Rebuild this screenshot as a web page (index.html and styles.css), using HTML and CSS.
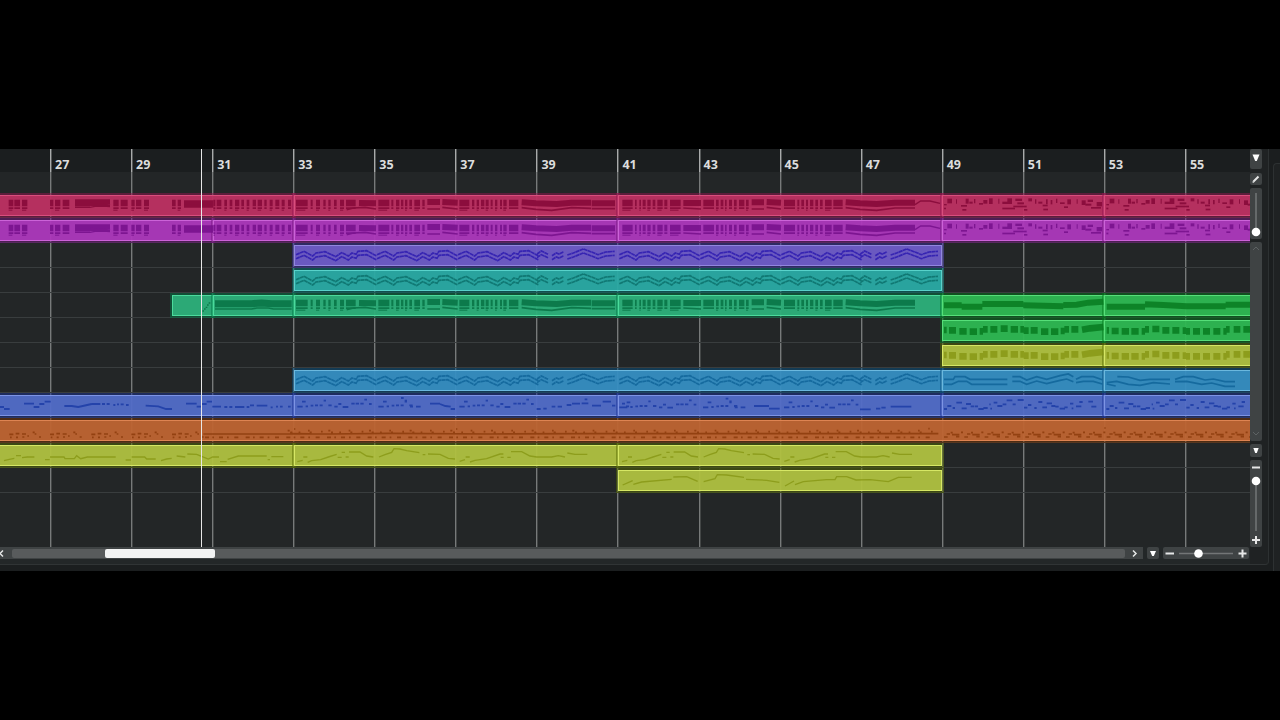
FILE: index.html
```
<!DOCTYPE html>
<html lang="en">

<head>
    <meta charset="UTF-8">
    <meta name="viewport" content="width=device-width, initial-scale=1.0">
    <title>Project Window</title>
    <link rel="stylesheet" href="styles.css">
</head>

<body>

    <div class="project">
        <div class="main">
            <div class="arrange">
                <div class="grid" id="grid"></div>
                <div class="ruler" id="ruler"></div>
                <div class="lane"></div>
                <div class="tracks" id="tracks"></div>
                <div class="cursor"></div>
            </div>

            <div class="bottom">
                <div class="hscroll">
                    <svg class="arrow-left" width="6" height="12" viewBox="0 0 6 12"><path d="M3 3.5L0 6.5l3 3" /></svg>
                    <div class="htrack"><div class="hthumb"></div></div>
                    <svg width="18" height="12" viewBox="0 0 18 12"><path d="M8 3.5l3 3-3 3" /></svg>
                </div>
                <div class="box menu"><svg width="12" height="12" viewBox="0 0 12 12"><path class="solid" d="M3 4h6L6.8 9H5.2z" /></svg></div>
                <div class="box hzoom">
                    <svg width="86" height="12" viewBox="0 0 86 12">
                        <path class="rail" d="M16 6.5h54" />
                        <path class="bold" d="M2.5 6.5h8.5M75.5 6.5h8M79.5 2.5v8" />
                        <circle cx="35.5" cy="6.5" r="4.3" />
                    </svg>
                </div>
            </div>
        </div>

        <div class="side">
            <div class="box top-menu"><svg width="12" height="20" viewBox="0 0 12 20"><path class="solid" d="M2.5 5.5h7L6.8 12H5.2z" /></svg></div>
            <div class="box pencil"><svg width="12" height="12" viewBox="0 0 12 12"><path class="bold" d="M3.5 8.5l5-5" /><path d="M2.7 9.5l1-1" /></svg></div>
            <div class="box wave-zoom">
                <svg width="12" height="51" viewBox="0 0 12 51"><path class="rail" d="M6 5v36" /><circle cx="6" cy="44" r="4.3" /></svg>
            </div>
            <div class="box vscroll">
                <svg width="12" height="12" viewBox="0 0 12 12"><path class="dim" d="M3 8l3-3 3 3" /></svg>
                <svg width="12" height="12" viewBox="0 0 12 12"><path class="dim" d="M3 3l3 3 3-3" /></svg>
            </div>
            <div class="box menu"><svg width="12" height="12" viewBox="0 0 12 12"><path class="solid" d="M3.3 4h5.4L6.8 9H5.2z" /></svg></div>
            <div class="box vzoom">
                <svg width="12" height="87" viewBox="0 0 12 87">
                    <path class="rail" d="M6 24v47" />
                    <path class="bold" d="M2 7.5h8M2 80h8M6 76v8" />
                    <circle cx="6" cy="21" r="4.3" />
                </svg>
            </div>
        </div>
        <div class="edge"></div>
        <div class="panel"></div>
    </div>

    <script src="script.js"></script>
</body>

</html>
```
FILE: styles.css
```
body {
    margin: 0;
    padding: 149px 0;
    height: 422px;
    background-color: #000;
    font-family: "Open Sans", "Noto Sans", sans-serif;
    overflow: hidden;
}

.project {
    display: flex;
    position: relative;
    width: 1280px;
    height: 422px;
    background-color: #1b1e1f;
}

.main {
    width: 1250px;
    height: 415px;
    background-color: #232728;
    border-bottom: 1px solid #303435;
}

.arrange {
    position: relative;
    width: 1250px;
    height: 398px;
    overflow: hidden;
    background-color: #232627;
}

.ruler {
    display: flex;
    height: 23px;
    background-color: #1b1e1f;
    position: relative;
}

.ruler div {
    flex: 0 0 81.07px;
    box-sizing: border-box;
    padding: 5px 0 0 4px;
    border-left: 1px solid #a9abab;
    box-shadow: inset 1px 0 #565959;
    color: #dcdddd;
    font-size: 12.5px;
    font-weight: 700;
    line-height: 21px;
}

.ruler .first,
.grid .first {
    flex-basis: 50px;
    border-left: none;
    box-shadow: none;
}

.grid {
    display: flex;
    position: absolute;
    inset: 0;
}

.grid div {
    flex: 0 0 81.07px;
    box-sizing: border-box;
    border-left: 1px solid #777a7a;
    box-shadow: inset 1px 0 #434646;
}

.lane {
    height: 21px;
}

.track {
    display: flex;
    position: relative;
    height: 25px;
    padding-top: 2px;
    box-sizing: border-box;
    border-bottom: 1px solid #393d3e;
}

.clip {
    flex: none;
    height: 21px;
    box-sizing: border-box;
    border: 1px solid;
    position: relative;
}

.notes {
    position: absolute;
    left: 0;
    top: 2px;
    opacity: 0.85;
}

.notes path {
    fill: none;
    stroke: currentColor;
}

.rose { background-color: rgba(190, 48, 98, 0.95); border-color: #d94e7d; box-shadow: 0 0 0 2px rgba(150, 20, 80, 0.5); }
.purple { background-color: rgba(173, 56, 188, 0.95); border-color: #cb63d8; box-shadow: 0 0 0 2px rgba(120, 20, 130, 0.5); }
.violet { background-color: rgba(111, 92, 200, 0.95); border-color: #9286df; box-shadow: 0 0 0 2px rgba(60, 45, 160, 0.5); }
.teal { background-color: rgba(42, 170, 164, 0.95); border-color: #58d2ca; box-shadow: 0 0 0 2px rgba(0, 120, 115, 0.5); }
.mint { background-color: rgba(45, 176, 122, 0.95); border-color: #4bdb9c; box-shadow: 0 0 0 2px rgba(0, 120, 70, 0.5); }
.green { background-color: rgba(46, 184, 82, 0.95); border-color: #56df79; box-shadow: 0 0 0 2px rgba(0, 120, 25, 0.5); }
.lime { background-color: rgba(176, 193, 64, 0.95); border-color: #d6e765; box-shadow: 0 0 0 2px rgba(85, 105, 0, 0.5); }
.sky { background-color: rgba(54, 142, 194, 0.95); border-color: #6bb8de; box-shadow: 0 0 0 2px rgba(5, 80, 130, 0.5); }
.blue { background-color: rgba(82, 109, 200, 0.95); border-color: #7d94e4; box-shadow: 0 0 0 2px rgba(25, 50, 150, 0.5); }
.orange { background-color: rgba(188, 100, 50, 0.96); border-color: #de8452; box-shadow: 0 0 0 2px rgba(120, 50, 0, 0.5); }

.n-rose { color: #850838; }
.n-purple { color: #77108c; }
.n-violet { color: #2d1bb0; }
.n-teal { color: #0c716c; }
.n-mint { color: #077244; }
.n-green { color: #087c21; }
.n-lime { color: #82920e; opacity: 0.7; }
.n-sky { color: #10659a; }
.n-blue { color: #1d3da7; }
.n-orange { color: #8d3c0c; }

.cursor {
    position: absolute;
    left: 201px;
    top: 0;
    width: 1px;
    height: 100%;
    background-color: #e8e8e8;
}

.bottom {
    display: flex;
    gap: 4px;
    height: 12px;
}

.hscroll {
    display: flex;
    width: 1143px;
    background-color: #3f4344;
}

.htrack {
    flex: 1;
    margin: 2px 0 1px 6px;
    border-radius: 2px;
    background-color: #585b5c;
}

.hthumb {
    width: 110px;
    height: 9px;
    margin-left: 93px;
    border-radius: 2px;
    background-color: #f2f3f3;
}

.box {
    background-color: #3f4344;
    border-radius: 2px;
}

.menu {
    width: 12px;
    height: 13px;
}

.bottom .menu {
    height: 12px;
}

.hzoom {
    width: 86px;
}

.side {
    display: flex;
    flex-direction: column;
    gap: 3px;
    width: 12px;
    height: 415px;
    background-color: #1f2223;
    border-bottom: 1px solid #303435;
}

.top-menu {
    height: 20px;
    margin-bottom: 1px;
}

.pencil {
    height: 12px;
}

.wave-zoom {
    height: 51px;
}

.vscroll {
    display: flex;
    flex-direction: column;
    justify-content: space-between;
    height: 199px;
}

.vzoom {
    height: 87px;
}

.edge {
    width: 6px;
    height: 415px;
    background-color: #1f2223;
    border-right: 1px solid #2d3132;
    border-bottom: 1px solid #303435;
    border-bottom-right-radius: 4px;
}

.panel {
    flex: 1;
    margin: 14px 0 0 4px;
    background-color: #1f2223;
    border-top: 1px solid #2d3132;
    border-left: 1px solid #2d3132;
    border-top-left-radius: 4px;
}

svg {
    display: block;
    fill: none;
    stroke: #e6e7e7;
    stroke-width: 1.5;
}

svg circle,
svg .solid {
    fill: #fff;
    stroke: none;
}

svg .bold {
    stroke-width: 2;
}

svg .rail {
    stroke: #737677;
}

svg .dim {
    stroke: #5d6263;
    stroke-width: 1;
}
```
FILE: script.js
```
// Note positions are in ticks: 3 ticks per pixel, y from the top of the clip.
// A..D are the tick offsets of the four sections of the song.
var A = 0, B = 870, C = 1830, D = 2790;

function box(x, y, w, h) {
    return 'M' + x + ' ' + (y + h / 2) + 'h' + w;
}

function path(d, width) {
    return '<path stroke-width="' + width + '" d="' + d + '"/>';
}

// Connected line through x,y pairs
function line(offset, pts, dy) {
    var d = '';
    for (var i = 0; i < pts.length; i += 2) {
        d += (i ? 'L' : 'M') + (offset + pts[i]) + ' ' + (pts[i + 1] + (dy || 0));
    }
    return d;
}

// Separate flat notes, x,y,width
function dashes(offset, list) {
    var d = '';
    for (var i = 0; i < list.length; i += 3) {
        d += 'M' + (offset + list[i]) + ' ' + list[i + 1] + 'h' + list[i + 2];
    }
    return d;
}

// Stacked chords, from-to pairs
function chords(offset, list) {
    var top = '', low = '', bottom = '';
    for (var i = 0; i < list.length; i += 2) {
        var x = offset + list[i], w = list[i + 1] - list[i];
        top += box(x, 14, w, 20);
        low += box(x, 37, w, 5);
        if (i % 4 !== 2) bottom += box(x, 44, w * 0.8, 3);
    }
    return path(top, 20) + path(low, 5) + path(bottom, 3);
}

var chordsA = [26, 40, 43, 60, 66, 82, 150, 160, 165, 181, 188, 208, 340, 356, 362, 383, 394, 404, 408, 424, 432, 447, 516, 527, 533, 543];
var chordsA2 = [640, 646, 650, 664, 673, 681, 689, 697, 705, 718, 724, 732, 740, 748, 758, 768, 773, 786, 793, 800, 809, 818, 826, 838, 845, 854, 864, 873];
var chordsB = [18, 53, 62, 68, 78, 90, 100, 107, 115, 122, 132, 140, 150, 162, 168, 197, 265, 298, 304, 310, 318, 328, 333, 340, 345, 352, 358, 366, 373, 390, 397, 404, 508, 538, 546, 553, 560, 567, 573, 583, 587, 596, 602, 608, 615, 622, 630, 636, 640, 650, 657, 685];
var chordsC = [37, 68, 75, 80, 88, 93, 98, 107, 112, 122, 128, 136, 142, 158, 163, 172, 180, 212, 280, 312, 318, 326, 332, 340, 345, 350, 357, 366, 372, 380, 387, 403, 408, 416, 522, 555, 562, 568, 574, 582, 588, 594, 600, 610, 616, 624, 630, 638, 645, 665, 670, 698];

function strings() {
    var thick = line(B, [207, 24, 258, 25]) + line(B, [412, 21, 450, 21]) + line(B, [457, 21, 503, 23]) +
        line(B, [695, 22, 738, 25, 800, 27, 845, 23, 903, 23]) + line(B, [905, 25, 975, 25]) +
        line(C, [220, 24, 273, 24]) + line(C, [425, 22, 462, 22]) + line(C, [470, 21, 513, 23]) +
        line(C, [707, 22, 750, 25, 800, 27, 855, 23, 915, 23]);
    var thin = line(B, [170, 44, 190, 39, 225, 37, 258, 42]) + line(B, [412, 42, 450, 42]) + line(B, [457, 37, 503, 42]) +
        line(B, [695, 38, 738, 43, 785, 46, 845, 38, 903, 40]) + line(B, [905, 41, 975, 41]) +
        line(C, [220, 39, 273, 42]) + line(C, [425, 42, 462, 42]) + line(C, [470, 37, 513, 42]) +
        line(C, [707, 38, 750, 43, 800, 46, 855, 39, 915, 39]);
    return chords(B, chordsB) + chords(C, chordsC) + path(thick, 18) + path(thin, 5);
}

function intro() {
    return chords(A, chordsA) + chords(A, chordsA2) +
        path(line(A, [225, 20, 270, 20]) + line(A, [270, 20, 330, 20]) + line(A, [552, 23, 640, 23]), 14) +
        path(line(A, [225, 30, 270, 30]) + line(A, [270, 28, 330, 32]) + line(A, [552, 34, 640, 34]), 9) +
        path(line(A, [225, 37, 270, 37, 285, 34, 330, 34]), 4);
}

// x, y, width, height
var stabs = [42, 27, 8, 3, 42, 38, 6, 4, 52, 11, 14, 13, 78, 13, 3, 12, 93, 30, 18, 4, 97, 42, 12, 4, 107, 11, 9, 14, 118, 20, 10, 5, 132, 12, 4, 12, 147, 24, 12, 4, 160, 15, 12, 10, 177, 10, 11, 16, 205, 11, 3, 14, 217, 38, 38, 4, 217, 20, 25, 6, 232, 10, 14, 16, 256, 11, 20, 6, 250, 32, 40, 4, 262, 22, 20, 5, 282, 42, 10, 4,
    295, 10, 11, 8, 315, 13, 4, 12, 325, 20, 12, 5, 338, 29, 15, 4, 340, 41, 14, 4, 348, 13, 5, 14, 362, 15, 5, 12, 378, 11, 4, 12, 390, 22, 14, 4, 402, 34, 12, 4, 412, 13, 11, 14, 440, 13, 3, 12, 455, 16, 12, 13, 466, 26, 18, 5, 473, 14, 16, 6, 483, 36, 30, 4, 500, 21, 16, 12];

function riff() {
    var out = '';
    for (var r = 0; r < 2; r++) {
        for (var i = 0; i < stabs.length; i += 4) {
            out += path(box(D + stabs[i] + r * 487, stabs[i + 1], stabs[i + 2], stabs[i + 3] + 1), stabs[i + 3] + 1);
        }
    }
    return out;
}

function arpeggio() {
    var bar = [6, 29, 30, 19, 56, 33, 66, 24, 93, 20, 125, 35, 143, 23, 163, 33, 174, 24, 186, 28, 192, 19, 218, 17, 248, 33];
    var d = '';
    [0, 12].forEach(function (dy) {
        [B + 12, C + 22].forEach(function (start) {
            for (var i = 0; i < 3; i++) d += line(start + i * 243, bar, dy);
            d += line(start, [729, 27, 742, 18, 763, 28], dy * 0.9);
            d += line(start, [774, 32, 787, 24, 795, 27, 809, 20], dy);
            d += line(start, [820, 30, 838, 24, 868, 12, 890, 20, 912, 29, 935, 21, 962, 19], dy);
        });
    });
    return '<g stroke-dasharray="12 1">' + path(d, 5) + '</g>';
}

function pads() {
    return arpeggio() + path(
        line(D, [42, 28, 70, 28, 75, 20, 105, 20, 120, 28, 232, 28]) + line(D, [42, 43, 65, 43, 85, 34, 110, 34, 125, 43, 232, 43]) +
        line(D, [247, 20, 270, 20, 290, 30, 320, 20, 350, 28, 390, 17, 415, 12, 430, 20]) +
        line(D, [247, 34, 270, 34, 290, 43, 320, 33, 350, 41, 390, 31, 410, 27, 430, 35]) +
        line(D, [438, 28, 455, 20, 490, 20, 517, 29]) + line(D, [438, 38, 460, 34, 490, 34, 517, 42]) +
        line(D, [530, 42, 557, 48]) + line(D, [530, 38, 560, 34, 595, 43, 630, 46, 670, 38, 720, 42]) +
        line(D, [562, 20, 595, 21, 630, 31, 660, 28, 720, 28]) +
        line(D, [735, 28, 760, 20, 790, 20, 825, 30, 850, 27, 885, 35, 915, 35]) +
        line(D, [735, 35, 770, 34, 815, 43, 845, 39, 885, 49, 915, 49]), 5);
}

function intoMint() {
    return strings() +
        path(line(A, [645, 26, 755, 26, 785, 24, 815, 26, 875, 26]), 21) +
        path(line(A, [645, 42, 755, 42, 770, 39, 805, 39, 820, 42, 875, 42]), 5) +
        path(dashes(A, [607, 48, 5, 612, 42, 5, 617, 37, 5, 621, 30, 5, 626, 24, 5]), 4);
}

function bass() {
    return path(line(D, [42, 31, 95, 31]) + line(D, [95, 35, 157, 35]) + line(D, [157, 27, 280, 27]) + line(D, [280, 31, 400, 34]) +
        line(D, [400, 30, 440, 29, 475, 23, 520, 20]) + line(D, [530, 35, 645, 35]) + line(D, [645, 28, 700, 30, 770, 34, 887, 34]) + line(D, [887, 29, 960, 29]), 18);
}

function pulses() {
    var d = dashes(D, [42, 30, 8, 57, 31, 21, 88, 34, 22, 119, 35, 22, 149, 34, 10, 159, 28, 14, 181, 28, 21, 212, 26, 21, 242, 28, 22, 271, 28, 11, 281, 32, 15, 302, 31, 21, 333, 35, 22, 363, 35, 22, 392, 33, 12, 403, 28, 14, 424, 28, 21]);
    d += dashes(D, [530, 31, 7, 545, 33, 21, 575, 34, 22, 604, 34, 22, 635, 34, 10, 645, 28, 12, 667, 27, 21, 697, 31, 21, 727, 31, 21, 758, 32, 10, 768, 34, 12, 789, 34, 21, 819, 34, 21, 850, 34, 21, 880, 34, 10, 888, 28, 11, 911, 28, 20, 940, 28, 20]);
    return path(d + line(D, [456, 29, 480, 25, 520, 21]), 20);
}

function plucks() {
    var d = dashes(A, [0, 36, 12, 12, 42, 17, 72, 26, 30, 101, 36, 17, 118, 27, 15, 134, 20, 18, 637, 35, 26, 673, 36, 9, 688, 36, 9, 705, 36, 28, 740, 36, 8, 750, 31, 12, 770, 32, 32, 812, 37, 6, 828, 35, 6, 840, 35, 8, 864, 35, 8,
        275, 27, 26, 306, 27, 9, 320, 27, 9, 340, 30, 6, 351, 28, 6, 362, 28, 9, 378, 30, 8, 558, 26, 32, 590, 35, 16, 606, 27, 14, 620, 20, 16]);
    d += line(A, [193, 33, 215, 33, 235, 36, 275, 27]) + line(A, [437, 32, 475, 34, 498, 42, 516, 42]);
    var phrase = [22, 35, 16, 36, 20, 11, 47, 34, 7, 62, 32, 8, 75, 31, 9, 89, 31, 9, 101, 17, 7, 115, 31, 10, 133, 35, 10, 145, 27, 9, 158, 36, 17, 184, 26, 10, 197, 26, 10, 211, 26, 10, 223, 14, 8, 237, 27, 8];
    [0, 243, 486].forEach(function (step, n) {
        var list = n === 1 ? phrase.slice(0, 24).concat([101, 20, 7, 90, 9, 8, 117, 35, 9, 135, 35, 14]) : phrase;
        d += dashes(B + step, list) + dashes(C + 14 + step, list.map(function (v, i) { return i % 3 === 1 ? v + 2 : v; }));
    });
    d += dashes(B, [420, 26, 30, 740, 42, 12, 760, 41, 10, 785, 35, 11, 803, 35, 13, 830, 30, 14, 846, 26, 24, 875, 25, 20, 884, 13, 8, 906, 32, 27, 938, 20, 25, 966, 32, 10, 988, 37, 10, 996, 26, 9, 1008, 34, 9]);
    d += line(B, [450, 27, 466, 33, 482, 35]) + dashes(B, [482, 42, 13]);
    d += dashes(C, [432, 33, 45, 477, 41, 32, 750, 43, 32, 798, 41, 13, 814, 38, 13, 842, 35, 62]);
    for (var r = 0; r < 2; r++) {
        d += dashes(D + r * 487, [42, 42, 9, 52, 33, 12, 68, 39, 7, 79, 23, 17, 95, 40, 15, 108, 27, 15, 122, 34, 10, 134, 34, 10, 145, 42, 16, 160, 39, 13, 178, 28, 4, 181, 41, 5, 191, 23, 11, 202, 33, 15, 218, 28, 11, 230, 16, 17, 248, 28, 9, 263, 15, 18,
            282, 38, 10, 294, 30, 10, 313, 39, 7, 325, 21, 12, 337, 37, 14, 350, 25, 16, 364, 33, 12, 376, 35, 10, 389, 41, 16, 403, 37, 10, 420, 26, 10, 425, 40, 5, 438, 34, 16, 448, 21, 10, 475, 20, 14, 484, 35, 15]);
    }
    return path(d, 5.5);
}

function drums() {
    var d = '';
    // loose groove, then a steady low line from bar 31 to 49
    [28, 150, 274, 394, 516].forEach(function (x) {
        d += dashes(A, [x, 43, 12, x + 2, 52, 5, x + 19, 41, 11, x + 20, 52, 6, x + 38, 42, 12, x + 39, 51, 6, x + 54, 48, 5, x + 70, 37, 6, x + 76, 42, 5, x + 89, 51, 6]);
    });
    d += dashes(A, [610, 42, 305]) + line(B, [0, 41, 120, 42, 300, 40, 600, 42, 900, 41, 985, 41]) + line(C, [0, 41, 985, 41]);
    for (var x = 615; x < D; x += 122) {
        d += dashes(0, [x, 52, 12, x + 22, 52, 5, x + 42, 52, 12, x + 66, 52, 5, x + 88, 52, 12]);
        if (x > 850) d += dashes(0, [x + 4, 32, 6, x + 12, 37, 6, x + 37, 37, 5, x + 65, 32, 5, x + 70, 37, 6, x + 104, 35, 5]);
    }
    for (x = D + 42; x < 3750; x += 61) {
        d += dashes(0, [x, 51, 11, x + 8, 42, 10, x + 20, 38, 6, x + 24, 44, 22, x + 36, 50, 10, x + 51, 37, 6]);
    }
    d += dashes(D, [-5, 26, 4, 523, 24, 4]) + dashes(B, [12, 27, 4, 498, 27, 4]);
    return path(d, 5);
}

function lead() {
    var d = line(A, [12, 47, 28, 43, 43, 40]) + dashes(A, [48, 32, 15, 135, 44, 14]) + line(A, [66, 38, 82, 36, 103, 36]) +
        line(A, [150, 36, 192, 36, 195, 41, 223, 41, 230, 32, 242, 41, 262, 36, 347, 36]) +
        dashes(A, [377, 45, 16]) + line(A, [395, 36, 434, 36, 440, 42, 467, 42]) + line(A, [483, 47, 500, 42, 515, 40]) +
        line(A, [530, 33, 556, 36]) + line(A, [562, 27, 590, 28, 625, 42, 638, 36, 657, 36]) + dashes(A, [660, 50, 20]) +
        line(A, [683, 43, 715, 33, 800, 33]) + dashes(A, [803, 44, 7, 814, 35, 36]);
    [B, C + 14].forEach(function (o) {
        d += line(o, [22, 50, 38, 46]) + dashes(o, [40, 36, 12]) + line(o, [53, 52, 65, 47, 92, 44, 115, 36, 140, 28]) +
            dashes(o, [143, 37, 12, 167, 36, 9, 155, 22, 10]) + line(o, [177, 21, 210, 21, 230, 33, 250, 36]) +
            line(o, [267, 36, 285, 29, 305, 22, 312, 11, 330, 12, 350, 17, 388, 23]) + dashes(o, [398, 29, 8]) +
            line(o, [414, 27, 450, 28, 475, 40, 495, 42]) + line(o, [509, 49, 525, 44]) + dashes(o, [527, 36, 12]) +
            line(o, [540, 51, 555, 46, 590, 41, 630, 27, 640, 27]) + dashes(o, [632, 37, 9, 652, 37, 10]) +
            line(o, [663, 20, 695, 20, 720, 33, 740, 36, 785, 36, 805, 32, 825, 36]) + line(o, [832, 24, 855, 28, 892, 28]);
    });
    return path(d, 4);
}

function harmony() {
    return path(line(C, [38, 45, 68, 32]) + line(C, [70, 43, 95, 36, 185, 28]) + line(C, [190, 21, 230, 20, 263, 34]) +
        line(C, [281, 35, 315, 26, 322, 14, 350, 15, 402, 22]) + line(C, [408, 28, 470, 31, 508, 37]) +
        line(C, [525, 48, 552, 33]) + line(C, [555, 44, 580, 35, 650, 29, 675, 29, 680, 20, 710, 20, 738, 30, 780, 29, 835, 35, 865, 22, 905, 22]), 4);
}

// Clip edges in pixels; a pair of [start, colour] opens each clip
var tracks = [
    { clips: [[-3, 'rose'], [294, 'rose'], [617.5, 'rose'], [942, 'rose'], [1104, 'rose'], 1254], notes: [['rose', intro() + strings() + riff() + path(line(C, [915, 29, 932, 18, 960, 18, 990, 25]), 4)]] },
    { clips: [[-3, 'purple'], [212.5, 'purple'], [294, 'purple'], [617.5, 'purple'], [942, 'purple'], [1104, 'purple'], 1254], notes: [['purple', intro() + strings() + riff() + path(line(C, [915, 29, 932, 18, 960, 18, 990, 25]), 4)]] },
    { clips: [[294, 'violet'], 942], notes: [['violet', arpeggio()]] },
    { clips: [[294, 'teal'], 942], notes: [['teal', arpeggio()]] },
    { clips: [[172, 'mint'], [212.5, 'mint'], [294, 'mint'], [617.5, 'mint'], [942, 'green'], [1104, 'green'], 1254], notes: [['mint', intoMint()], ['green', bass()]] },
    { clips: [[942, 'green'], [1104, 'green'], 1254], notes: [['green', pulses()]] },
    { clips: [[942, 'lime'], [1104, 'lime'], 1254], notes: [['lime', pulses()]] },
    { clips: [[294, 'sky'], [942, 'sky'], [1104, 'sky'], 1254], notes: [['sky', pads()]] },
    { clips: [[-3, 'blue'], [294, 'blue'], [617.5, 'blue'], [942, 'blue'], [1104, 'blue'], 1254], notes: [['blue', plucks()]] },
    { clips: [[-3, 'orange'], 1254], notes: [['orange', drums()]] },
    { clips: [[-3, 'lime'], [294, 'lime'], [617.5, 'lime'], 942], notes: [['lime', lead()]] },
    { clips: [[617.5, 'lime'], 942], notes: [['lime', harmony()]] }
];

var html = '';
tracks.forEach(function (track) {
    html += '<div class="track">';
    for (var i = 0; i < track.clips.length - 1; i++) {
        var clip = track.clips[i], next = track.clips[i + 1];
        var end = Array.isArray(next) ? next[0] : next;
        html += '<div class="clip ' + clip[1] + '" style="width:' + (end - clip[0]) + 'px;' +
            (i === 0 ? 'margin-left:' + clip[0] + 'px' : '') + '"></div>';
    }
    track.notes.forEach(function (n) {
        html += '<svg class="notes n-' + n[0] + '" width="1250" height="21" viewBox="0 0 3750 63">' + n[1] + '</svg>';
    });
    html += '</div>';
});
document.getElementById('tracks').innerHTML = html;

var ruler = '<div class="first"></div>';
var grid = ruler;
for (var bar = 27; bar <= 55; bar += 2) {
    ruler += '<div>' + bar + '</div>';
    grid += '<div></div>';
}
document.getElementById('ruler').innerHTML = ruler;
document.getElementById('grid').innerHTML = grid;
```
